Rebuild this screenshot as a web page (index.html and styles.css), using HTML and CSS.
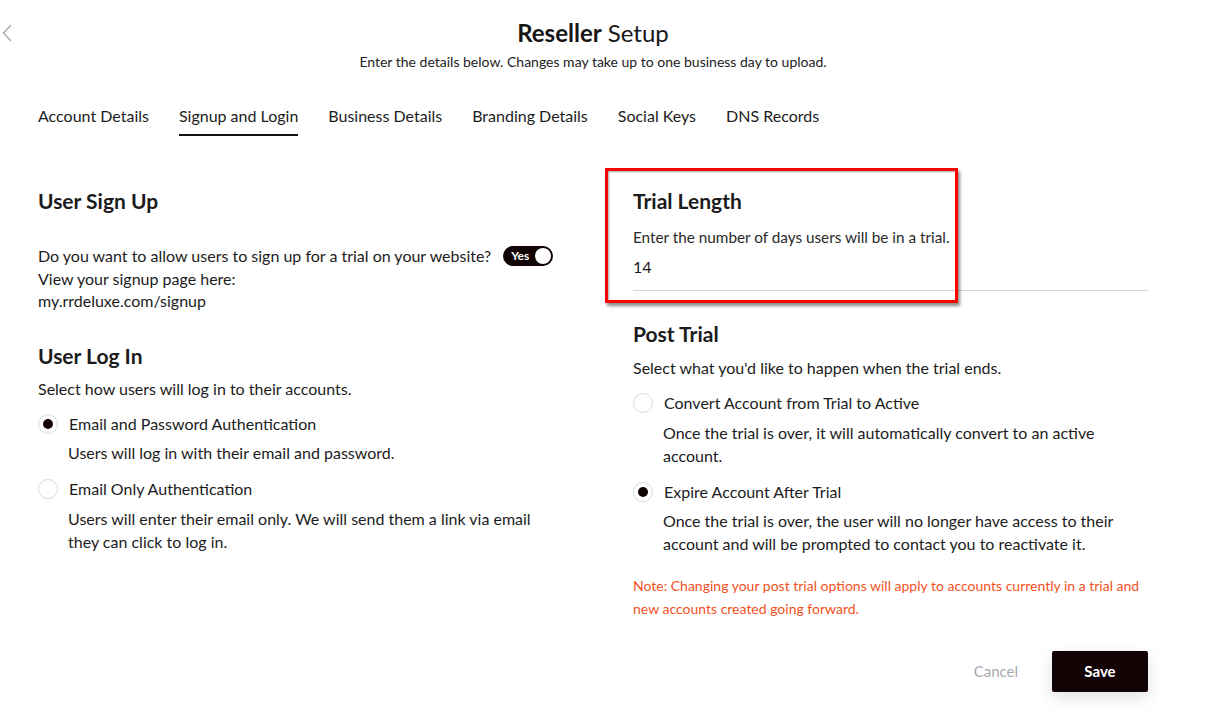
FILE: index.html
```html
<!DOCTYPE html>
<html>
<head>
    <title>Reseller Setup</title>
    <link rel="stylesheet" href="styles.css">
</head>
<body>
    <div class="page">
        <a class="back-link" href="#">
            <svg width="10" height="18" viewBox="0 0 10 18"><path d="M9 1 L1.5 9 L9 17" fill="none" stroke="#9aa3ae" stroke-width="1.2"/></svg>
        </a>

        <div class="header">
            <h1><strong>Reseller</strong> Setup</h1>
            <p class="subtitle">Enter the details below. Changes may take up to one business day to upload.</p>
        </div>

        <div class="tabs">
            <div class="tab">Account Details</div>
            <div class="tab active">Signup and Login</div>
            <div class="tab">Business Details</div>
            <div class="tab">Branding Details</div>
            <div class="tab">Social Keys</div>
            <div class="tab">DNS Records</div>
        </div>

        <div class="content">
            <div class="column">
                <h2>User Sign Up</h2>
                <div class="signup-text">
                    <div class="signup-row">
                        <span>Do you want to allow users to sign up for a trial on your website?</span>
                        <div class="toggle"><span class="toggle-label">Yes</span><span class="toggle-knob"></span></div>
                    </div>
                    <div>View your signup page here:</div>
                    <div>my.rrdeluxe.com/signup</div>
                </div>

                <h2 class="section-gap">User Log In</h2>
                <p class="section-desc">Select how users will log in to their accounts.</p>

                <div class="radio-option">
                    <div class="radio-row"><span class="radio checked"></span>Email and Password Authentication</div>
                    <div class="radio-desc">Users will log in with their email and password.</div>
                </div>
                <div class="radio-option">
                    <div class="radio-row"><span class="radio"></span>Email Only Authentication</div>
                    <div class="radio-desc">Users will enter their email only. We will send them a link via email they can click to log in.</div>
                </div>
            </div>

            <div class="column">
                <div class="trial-length">
                    <h2>Trial Length</h2>
                    <label class="field-label">Enter the number of days users will be in a trial.</label>
                    <div class="field-value">14</div>
                    <div class="highlight-box"></div>
                </div>

                <h2 class="post-trial">Post Trial</h2>
                <p class="section-desc post-desc">Select what you'd like to happen when the trial ends.</p>

                <div class="radio-option">
                    <div class="radio-row"><span class="radio"></span>Convert Account from Trial to Active</div>
                    <div class="radio-desc">Once the trial is over, it will automatically convert to an active account.</div>
                </div>
                <div class="radio-option">
                    <div class="radio-row"><span class="radio checked"></span>Expire Account After Trial</div>
                    <div class="radio-desc">Once the trial is over, the user will no longer have access to their account and will be prompted to contact you to reactivate it.</div>
                </div>

                <p class="note">Note: Changing your post trial options will apply to accounts currently in a trial and new accounts created going forward.</p>

                <div class="actions">
                    <button class="cancel-btn">Cancel</button>
                    <button class="save-btn">Save</button>
                </div>
            </div>
        </div>
    </div>
</body>
</html>
```

FILE: styles.css
```css
* {
    margin: 0;
    padding: 0;
    box-sizing: border-box;
}

body {
    background-color: #ffffff;
    color: #1c1c1c;
    font-family: Lato, 'Open Sans', sans-serif;
    font-size: 16px;
}

.page {
    position: relative;
    width: 1220px;
    height: 726px;
    padding: 0 38px;
}

.back-link {
    position: absolute;
    left: 2px;
    top: 24px;
}

.header {
    text-align: center;
    padding-top: 17px;
    margin-right: 34px;
}

h1 {
    font-size: 24px;
    font-weight: 400;
    line-height: 32px;
    color: #161616;
}

h1 strong {
    font-weight: 700;
}

.subtitle {
    margin-top: 4px;
    font-size: 14px;
    line-height: 18px;
    color: #222;
}

.tabs {
    display: flex;
    gap: 30px;
    margin-top: 35px;
}

.tab {
    line-height: 20px;
    padding-bottom: 8px;
    border-bottom: 2px solid transparent;
    color: #1c1c1c;
}

.tab.active {
    border-bottom-color: #111;
}

.content {
    display: grid;
    grid-template-columns: 520px 515px;
    gap: 75px;
    margin-top: 52px;
}

h2 {
    font-size: 21px;
    font-weight: 700;
    line-height: 26px;
    color: #1c1c1c;
}

.signup-text {
    margin-top: 31px;
    line-height: 22.5px;
}

.signup-row {
    display: flex;
    align-items: center;
    gap: 12px;
}

.toggle {
    width: 50px;
    height: 20px;
    background: #120404;
    border-radius: 10px;
    display: flex;
    align-items: center;
    justify-content: space-between;
    padding: 0 2px 0 8px;
}

.toggle-label {
    color: #fff;
    font-size: 12px;
    font-weight: 700;
    line-height: 1;
}

.toggle-knob {
    width: 16px;
    height: 16px;
    background: #fff;
    border-radius: 50%;
}

.section-gap {
    margin-top: 30px;
}

.section-desc {
    margin-top: 10px;
    line-height: 20px;
}

.post-desc {
    margin-top: 11px;
}

.radio-option {
    margin-top: 15px;
}

.radio-row {
    display: flex;
    align-items: center;
    gap: 11px;
    line-height: 20px;
}

.radio {
    width: 20px;
    height: 20px;
    border: 1px solid #d8dae2;
    border-radius: 50%;
    display: inline-flex;
    align-items: center;
    justify-content: center;
}

.radio.checked::after {
    content: "";
    width: 10px;
    height: 10px;
    border-radius: 50%;
    background: #120404;
}

.radio-desc {
    margin-top: 7.5px;
    padding-left: 30px;
    line-height: 23px;
}

.trial-length {
    position: relative;
    padding-bottom: 13px;
    border-bottom: 1px solid #d3d6e0;
}

.field-label {
    display: block;
    margin-top: 14px;
    font-size: 15.3px;
    line-height: 18px;
    color: #2a2a2a;
}

.field-value {
    margin-top: 11px;
    line-height: 20px;
}

.highlight-box {
    position: absolute;
    left: -28px;
    top: -20px;
    width: 353px;
    height: 135px;
    border: 3px solid #ff0000;
    box-shadow: 2px 3px 3px rgba(0, 0, 0, 0.45), inset 1px 1px 2px rgba(0, 0, 0, 0.35);
}

.post-trial {
    margin-top: 30px;
}

.note {
    margin-top: 19px;
    font-size: 14px;
    line-height: 23px;
    color: #f4511e;
}

.actions {
    display: flex;
    justify-content: flex-end;
    align-items: center;
    gap: 34px;
    margin-top: 30.5px;
}

button {
    font-family: Lato, 'Open Sans', sans-serif;
    font-size: 15px;
    border: none;
    cursor: pointer;
}

.cancel-btn {
    background: transparent;
    color: #a7a9ac;
}

.save-btn {
    width: 96px;
    height: 41px;
    background: #120404;
    color: #fff;
    font-weight: 700;
    border-radius: 2px;
    box-shadow: 0 6px 16px rgba(0, 0, 0, 0.12);
}
```
